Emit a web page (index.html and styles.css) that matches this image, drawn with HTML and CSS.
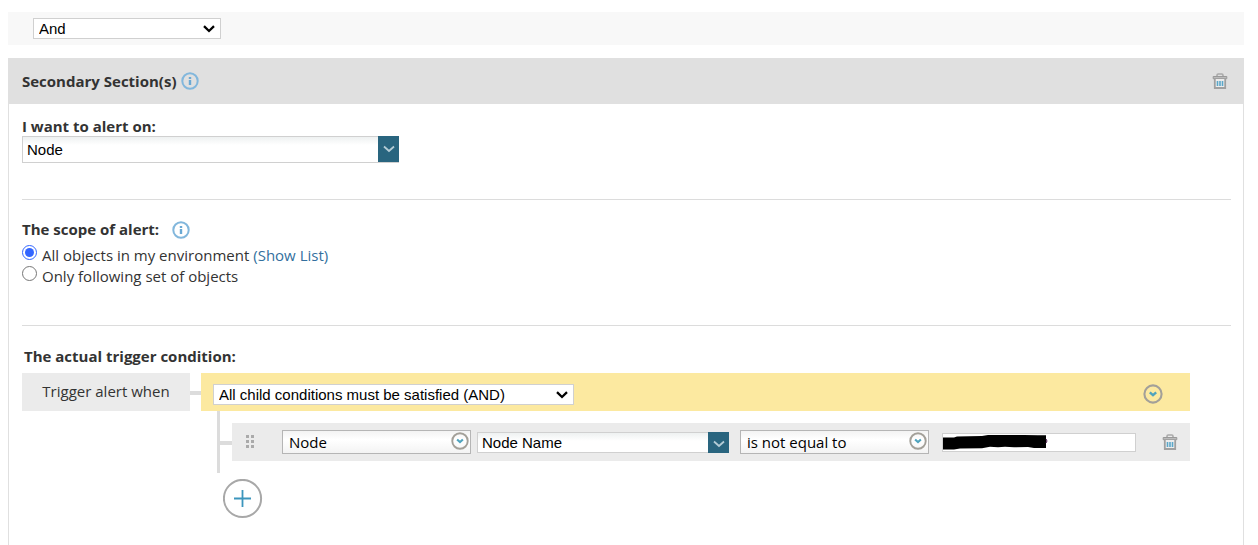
FILE: index.html
```html
<!DOCTYPE html>
<html lang="en">
<head>
    <meta charset="UTF-8">
    <meta name="viewport" content="width=device-width, initial-scale=1.0">
    <title>Trigger Condition</title>
    <link rel="stylesheet" href="styles.css">
</head>
<body>
    <!-- Shared icons -->
    <svg class="sprite" aria-hidden="true">
        <symbol id="info" viewBox="0 0 18 18">
            <circle cx="9" cy="9" r="7.7" fill="none" stroke="#82b7dc" stroke-width="2"/>
            <path d="M7.8 5h2.4v2H7.8zM7.8 8h2.4v5H7.8z" fill="#6aa9d4"/>
        </symbol>
        <symbol id="trash" viewBox="0 0 16 16">
            <path d="M5 3V2.2Q5 1 6.2 1h3.6Q11 1 11 2.2V3" fill="none" stroke="#aaa" stroke-width="1.6"/>
            <path d="M1.2 3.5h13.6v2.2H1.2z" fill="#bbb" stroke="#999"/>
            <path d="M2.8 6v9h10.4V6" fill="#ececec" stroke="#a0a0a0" stroke-width="1.8"/>
            <path d="M5.5 8v5M8 8v5M10.5 8v5" stroke="#5ba7c9" stroke-width="1.6"/>
        </symbol>
        <symbol id="circle-down" viewBox="0 0 20 20">
            <circle cx="10" cy="10" r="8.6" fill="none" stroke="#a3a099" stroke-width="2.1"/>
            <path d="M6.8 8.4L10 11.2l3.2-2.8" fill="none" stroke="#4fa3bd" stroke-width="2.4"/>
        </symbol>
        <symbol id="chevron" viewBox="0 0 12 8">
            <path d="M1 1.5l5 4.5 5-4.5" fill="none" stroke="#b4ccd6" stroke-width="1.8"/>
        </symbol>
        <symbol id="select-arrow" viewBox="0 0 12 8">
            <path d="M1 1.2l5 4.8 5-4.8" fill="none" stroke="#000" stroke-width="2.3"/>
        </symbol>
    </svg>

    <div class="operator-bar">
        <div class="plain-select operator">
            <select aria-label="Section operator">
                <option>And</option>
                <option>Or</option>
            </select>
            <svg><use href="#select-arrow"/></svg>
        </div>
    </div>

    <main class="panel">
        <header class="panel-header">
            <h2>Secondary Section(s)</h2>
            <svg class="info"><use href="#info"/></svg>
            <button class="icon-button push-right" aria-label="Delete section"><svg class="trash"><use href="#trash"/></svg></button>
        </header>

        <div class="panel-body">
            <!-- Object type -->
            <section class="alert-on">
                <label class="title" for="objectType">I want to alert on:</label>
                <div class="combo">
                    <select id="objectType">
                        <option>Node</option>
                    </select>
                    <span class="combo-arrow"><svg><use href="#chevron"/></svg></span>
                </div>
            </section>

            <!-- Scope -->
            <section class="scope">
                <h3 class="title">The scope of alert: <svg class="info"><use href="#info"/></svg></h3>
                <div class="radio-row">
                    <input type="radio" name="scope" id="scopeAll" checked>
                    <label for="scopeAll">All objects in my environment</label>
                    <a href="#">(Show List)</a>
                </div>
                <div class="radio-row">
                    <input type="radio" name="scope" id="scopeSet">
                    <label for="scopeSet">Only following set of objects</label>
                </div>
            </section>

            <!-- Condition tree -->
            <section class="trigger">
                <h3 class="title">The actual trigger condition:</h3>
                <div class="tree">
                    <div class="tree-label">Trigger alert when</div>
                    <div class="link"></div>
                    <div class="group">
                        <div class="group-header">
                            <div class="plain-select group-mode">
                                <select aria-label="Group condition">
                                    <option>All child conditions must be satisfied (AND)</option>
                                    <option>At least one child condition must be satisfied (OR)</option>
                                </select>
                                <svg><use href="#select-arrow"/></svg>
                            </div>
                            <button class="icon-button push-right" aria-label="Group menu"><svg class="menu-icon"><use href="#circle-down"/></svg></button>
                        </div>
                        <div class="children">
                            <div class="link"></div>
                            <div class="condition">
                                <svg class="grip" viewBox="0 0 8 14">
                                    <path d="M0 0h3v3H0zM5 0h3v3H5zM0 5h3v3H0zM5 5h3v3H5zM0 10h3v3H0zM5 10h3v3H5z" fill="#aaa"/>
                                </svg>
                                <div class="pick">
                                    <select aria-label="Object">
                                        <option>Node</option>
                                    </select>
                                    <svg><use href="#circle-down"/></svg>
                                </div>
                                <div class="combo combo-small">
                                    <select aria-label="Field">
                                        <option>Node Name</option>
                                    </select>
                                    <span class="combo-arrow"><svg><use href="#chevron"/></svg></span>
                                </div>
                                <div class="pick">
                                    <select aria-label="Comparison">
                                        <option>is not equal to</option>
                                        <option>is equal to</option>
                                    </select>
                                    <svg><use href="#circle-down"/></svg>
                                </div>
                                <div class="value">
                                    <input type="text" aria-label="Value">
                                    <svg class="redaction" viewBox="0 0 106 16">
                                        <path d="M1 3.5h11l3-1 25-.5 6-1h36l14 .3h8V14H92l-6-1-14 .3-9-.6-7 .6-8-.5-8 1.4-22 .4-6 1H1z"/>
                                        <path d="M104 5q2 2 0 4" fill="none" stroke="#414"/>
                                    </svg>
                                </div>
                                <button class="icon-button push-right" aria-label="Delete condition"><svg class="trash"><use href="#trash"/></svg></button>
                            </div>
                        </div>
                        <button class="add-button" aria-label="Add condition">
                            <svg viewBox="0 0 40 40">
                                <circle cx="19.5" cy="19.5" r="18.6" fill="#fff" stroke="#a8a8a8" stroke-width="2"/>
                                <path d="M19.5 11v17M11 19.5h17" stroke="#3c96bd" stroke-width="1.8"/>
                            </svg>
                        </button>
                    </div>
                </div>
            </section>
        </div>
    </main>
</body>
</html>
```
FILE: styles.css
```css
* {
    box-sizing: border-box;
}

body {
    font-family: "Open Sans", Arial, sans-serif;
    font-size: 15px;
    line-height: 21px;
    color: #333;
    background-color: #fff;
    margin: 0;
    padding: 12px 14px 0 8px;
    min-height: 100vh;
    display: flex;
    flex-direction: column;
}

svg {
    display: block;
}

.sprite {
    position: absolute;
    width: 0;
    height: 0;
}

h2,
h3 {
    font-size: 15px;
    font-weight: 700;
    margin: 0;
}

a {
    color: #336f9e;
    text-decoration: none;
}

select,
input[type="text"] {
    font-family: "Liberation Sans", Arial, sans-serif;
    font-size: 15px;
    color: #000;
    background-color: #fff;
    border: 1px solid #d0d0d0;
    border-radius: 0;
    margin: 0;
}

/* Plain drop-down */
.plain-select {
    position: relative;
}

.plain-select select {
    display: block;
    appearance: none;
    width: 100%;
    height: 21px;
    padding: 0 24px 0 5px;
}

.plain-select svg {
    position: absolute;
    top: 7px;
    right: 6px;
    width: 12px;
    height: 8px;
    pointer-events: none;
}

.operator {
    width: 188px;
}

.icon-button,
.add-button {
    background: none;
    border: none;
    padding: 0;
    cursor: pointer;
}

.push-right {
    margin-left: auto;
}

.info {
    width: 18px;
    height: 18px;
}

.trash {
    width: 16px;
    height: 16px;
}

/* Top bar */
.operator-bar {
    background-color: #f8f8f8;
    display: flex;
    align-items: center;
    height: 33px;
    padding-left: 25px;
    margin-bottom: 13px;
}

/* Panel */
.panel {
    flex: 1;
    border: 1px solid #e0e0e0;
    border-width: 0 1px;
}

.panel-header {
    display: flex;
    align-items: center;
    gap: 5px;
    height: 46px;
    padding: 0 15px 0 13px;
    background-color: #e0e0e0;
}

.panel-body {
    padding: 12px 12px 0 13px;
}

.title {
    display: block;
    font-weight: 700;
}

/* Combo box with a blue arrow */
.combo {
    position: relative;
    width: 377px;
}

.combo select {
    display: block;
    appearance: none;
    width: 100%;
    height: 27px;
    padding: 0 24px 0 4px;
    background-image: linear-gradient(#eef1f1, #fff 8px);
}

.combo-arrow {
    position: absolute;
    top: 0;
    right: 0;
    bottom: 1px;
    width: 21px;
    background-color: #29657f;
    display: flex;
    align-items: center;
    justify-content: center;
    pointer-events: none;
}

.combo-arrow svg {
    width: 12px;
    height: 8px;
}

.alert-on {
    padding-bottom: 36px;
    border-bottom: 1px solid #dcdcdc;
}

.alert-on .title {
    height: 20px;
}

/* Scope */
.scope {
    padding: 19px 0 38px;
    border-bottom: 1px solid #dcdcdc;
}

.scope .title {
    display: flex;
    align-items: center;
    gap: 13px;
    margin-bottom: 5px;
}

.radio-row {
    display: flex;
    gap: 4px;
}

.radio-row input {
    width: 15px;
    height: 15px;
    margin: 0 1px 0 0;
    accent-color: #3366ff;
}

/* Condition tree */
.trigger {
    padding-top: 20px;
}

.trigger .title {
    padding-left: 2px;
    margin-bottom: 6px;
}

.tree {
    display: flex;
    align-items: flex-start;
    margin-right: 41px;
}

.tree-label {
    width: 168px;
    height: 38px;
    line-height: 36px;
    text-align: center;
    background-color: #ebebeb;
}

.link {
    width: 12px;
    height: 4px;
    margin-top: 18px;
    background-color: #dcdcdc;
}

.tree > .link {
    width: 11px;
}

.group {
    flex: 1;
}

.group-header {
    display: flex;
    align-items: center;
    height: 38px;
    padding: 4px 27px 0 12px;
    background-color: #fce9a0;
}

.group-mode {
    width: 361px;
}

.menu-icon {
    width: 20px;
    height: 20px;
}

.children {
    display: flex;
    margin-left: 16px;
    padding: 12px 0;
    border-left: 3px solid #dcdcdc;
}

.condition {
    flex: 1;
    display: flex;
    align-items: center;
    height: 38px;
    padding: 0 12px 0 14px;
    background-color: #ebebeb;
}

.grip {
    width: 8px;
    height: 14px;
    margin-right: 28px;
}

.pick {
    position: relative;
    width: 189px;
}

.pick select {
    display: block;
    appearance: none;
    width: 100%;
    height: 24px;
    padding: 0 28px 0 6px;
    font-family: "Open Sans", Arial, sans-serif;
    border-color: #b5b5b5;
    background-image: linear-gradient(#f3f3f3, #fff 40%, #f3f3f3);
}

.pick svg {
    position: absolute;
    top: 2px;
    right: 2px;
    width: 18px;
    height: 18px;
    pointer-events: none;
}

.combo-small {
    width: 252px;
    margin: 0 11px 0 6px;
}

.combo-small select {
    height: 21px;
}

.combo-small .combo-arrow {
    bottom: 0;
    padding-top: 4px;
}

.value {
    position: relative;
    width: 194px;
    margin-left: 13px;
}

.value input {
    display: block;
    width: 100%;
    height: 19px;
    padding: 0 4px;
}

.redaction {
    position: absolute;
    top: 1px;
    left: 0;
    width: 106px;
    height: 16px;
}

.add-button {
    display: block;
    width: 40px;
    height: 40px;
    margin: 6px 0 0 22px;
}
```
